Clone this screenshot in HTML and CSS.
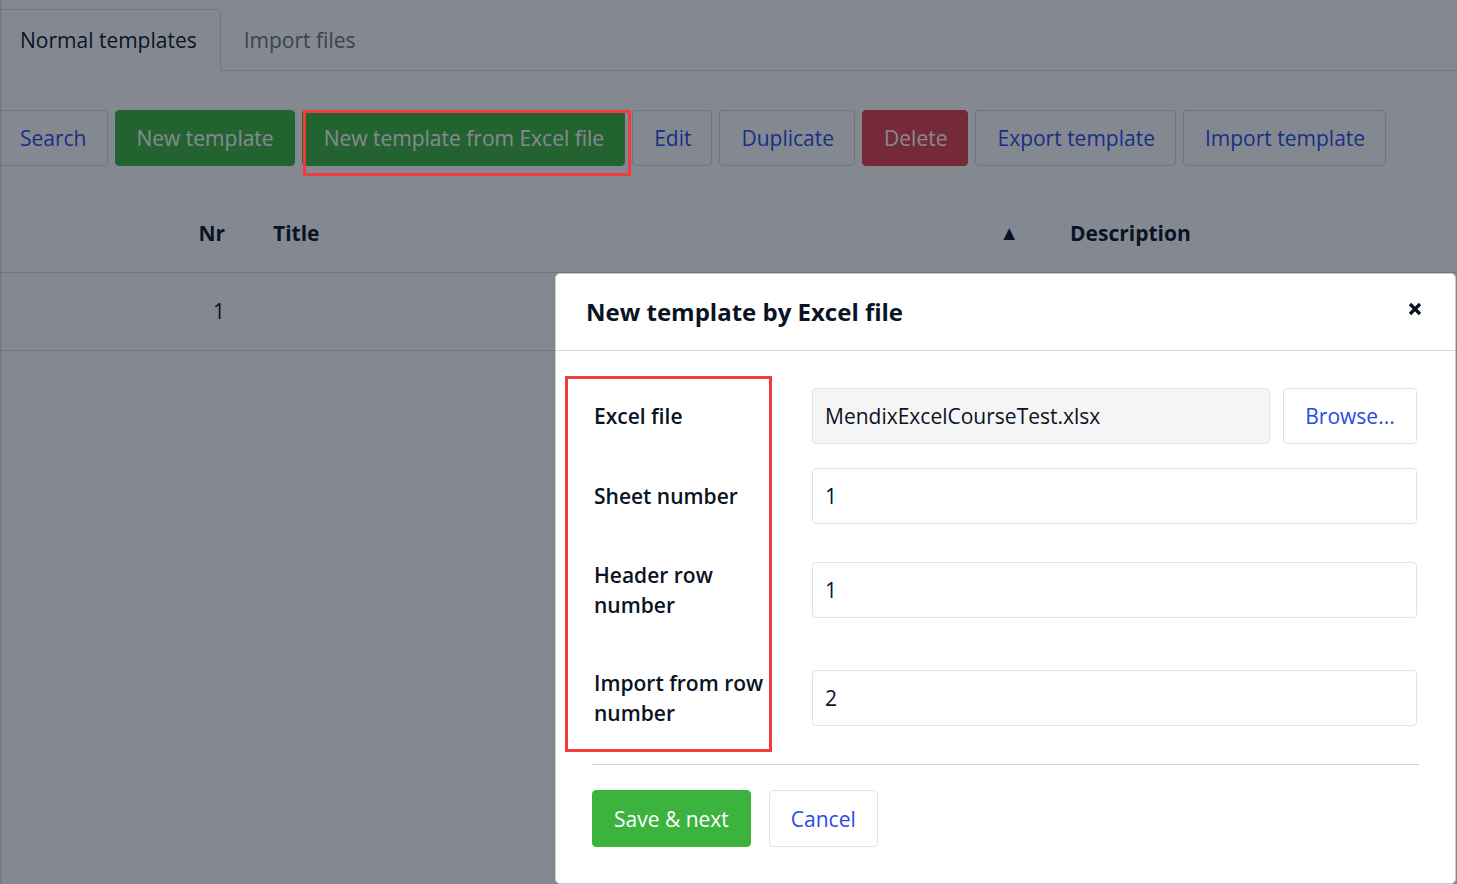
FILE: index.html
```html
<!DOCTYPE html>
<html lang="en">
<head>
<meta charset="utf-8">
<title>Templates</title>
<link rel="stylesheet" href="styles.css">
</head>
<body>
<div class="page">
  <div class="tabs">
    <div class="tab tab-active">Normal templates</div>
    <div class="tab">Import files</div>
  </div>
  <div class="toolbar">
    <button class="btn btn-default">Search</button>
    <button class="btn btn-success">New template</button>
    <button class="btn btn-success">New template from Excel file</button>
    <button class="btn btn-default">Edit</button>
    <button class="btn btn-default">Duplicate</button>
    <button class="btn btn-danger">Delete</button>
    <button class="btn btn-default">Export template</button>
    <button class="btn btn-default">Import template</button>
  </div>
  <table class="grid">
    <thead>
      <tr>
        <th class="col-nr">Nr</th>
        <th class="col-title"><span class="th-flex"><span>Title</span><span class="sort">&#9650;</span></span></th>
        <th class="col-desc">Description</th>
      </tr>
    </thead>
    <tbody>
      <tr>
        <td class="col-nr">1</td>
        <td class="col-title"></td>
        <td class="col-desc"></td>
      </tr>
    </tbody>
  </table>
</div>

<div class="backdrop"></div>

<div class="modal">
  <div class="modal-header">
    <h4 class="modal-title">New template by Excel file</h4>
    <span class="modal-close"><svg width="14" height="14" viewBox="0 0 14 14"><path d="M2 2 L12 12 M12 2 L2 12" stroke="#0a1324" stroke-width="3.2" stroke-linecap="butt"/></svg></span>
  </div>
  <div class="modal-body">
    <div class="form-row">
      <label class="form-label">Excel file</label>
      <div class="form-control-wrap file-wrap">
        <div class="input input-readonly">MendixExcelCourseTest.xlsx</div>
        <button class="btn btn-default btn-browse">Browse...</button>
      </div>
    </div>
    <div class="form-row">
      <label class="form-label">Sheet number</label>
      <div class="form-control-wrap"><div class="input">1</div></div>
    </div>
    <div class="form-row">
      <label class="form-label">Header row number</label>
      <div class="form-control-wrap"><div class="input">1</div></div>
    </div>
    <div class="form-row">
      <label class="form-label">Import from row number</label>
      <div class="form-control-wrap"><div class="input">2</div></div>
    </div>
    <div class="modal-footer">
      <button class="btn btn-save">Save &amp; next</button>
      <button class="btn btn-default btn-cancel">Cancel</button>
    </div>
  </div>
</div>

<div class="edge"></div>
<div class="mark mark-button"></div>
<div class="mark mark-labels"></div>
</body>
</html>
```

FILE: styles.css
```css
* { box-sizing: border-box; }

html, body {
  margin: 0;
  padding: 0;
  background: #ffffff;
  font-family: "Open Sans", "Noto Sans", sans-serif;
  color: #0a1324;
  overflow: hidden;
  height: 100%;
}

.page {
  margin-left: -2px;
  padding-top: 9px;
}

/* Tabs */
.tabs {
  display: flex;
  border-bottom: 1px solid #d6d8dc;
}
.tab {
  font-size: 21px;
  line-height: 30px;
  padding: 15px 23px 15px 22px;
  color: #6c7079;
  border: 1px solid transparent;
  border-bottom: none;
  margin-bottom: -1px;
}
.tab-active {
  color: #0a1324;
  background: #fff;
  border-color: #d6d8dc;
  border-radius: 4px 4px 0 0;
  padding: 15px 23px 16px 21px;
}

/* Toolbar */
.toolbar {
  display: flex;
  gap: 7px;
  margin-top: 39px;
}
.btn {
  font-family: "Open Sans", "Noto Sans", sans-serif;
  font-size: 21px;
  line-height: 28px;
  height: 56px;
  padding: 0 20px 0 21px;
  border: 1px solid #d6d8dc;
  border-radius: 4px;
  background: #ffffff;
  color: #264ae5;
  cursor: pointer;
  white-space: nowrap;
}
.btn-success {
  background: #3cb33d;
  border-color: #3cb33d;
  color: #ffffff;
}
.btn-danger {
  background: #e33f4e;
  border-color: #e33f4e;
  color: #ffffff;
}

/* Grid */
.grid {
  margin-top: 28px;
  width: 100%;
  border-collapse: collapse;
  table-layout: fixed;
}
.grid th, .grid td {
  font-size: 21px;
  line-height: 30px;
  height: 78px;
  padding: 0 24px;
  text-align: left;
  vertical-align: middle;
}
.grid th {
  font-weight: 700;
  border-bottom: 1px solid #d6d8dc;
}
.grid td {
  border-bottom: 1px solid #d6d8dc;
}
.grid .col-nr { width: 251px; text-align: right; }
.grid .col-title { width: 797px; padding-right: 27px; }
.th-flex {
  display: flex;
  justify-content: space-between;
  align-items: center;
}
.sort { font-size: 20px; }

/* Backdrop */
.backdrop {
  position: fixed;
  inset: 0;
  background: rgba(10, 19, 36, 0.5);
}
.edge {
  position: fixed;
  left: 0;
  top: 0;
  bottom: 0;
  width: 2px;
  background: rgba(10, 19, 36, 0.1);
}

/* Modal */
.modal {
  position: absolute;
  left: 555px;
  top: 273px;
  width: 901px;
  background: #ffffff;
  border: 1px solid #c8cbd0;
  border-radius: 5px;
}
.modal-header {
  height: 77px;
  display: flex;
  align-items: center;
  justify-content: space-between;
  padding: 0 33px 0 30px;
  border-bottom: 1px solid #d6d8dc;
}
.modal-title {
  margin: 0;
  font-size: 24px;
  font-weight: 700;
  line-height: 30px;
  color: #0a1324;
}
.modal-close {
  display: flex;
  width: 14px;
  height: 14px;
  margin-top: -6px;
}
.modal-body {
  padding: 37px 38px 36px 36px;
}
.form-row {
  display: flex;
  align-items: center;
  margin-bottom: 24px;
}
.form-label {
  width: 220px;
  flex: none;
  padding: 12px 24px 12px 2px;
  font-size: 21px;
  line-height: 30px;
  font-weight: 600;
  color: #0a1324;
}
.form-control-wrap {
  flex: 1;
  display: flex;
  gap: 13px;
}
.input {
  flex: 1;
  height: 56px;
  border: 1px solid #e2e3e6;
  border-radius: 4px;
  padding: 0 12px;
  font-size: 21px;
  line-height: 54px;
  color: #0a1324;
  background: #ffffff;
}
.input-readonly {
  background: #f5f5f6;
}
.btn-browse {
  border-color: #e2e3e6;
  padding: 0 21px;
  width: 134px;
}
.modal-footer {
  border-top: 1px solid #d0d2d6;
  padding-top: 25px;
  margin-right: -2px;
  display: flex;
  gap: 18px;
}
.btn-save {
  background: #3cb33d;
  border-color: #3cb33d;
  color: #ffffff;
  height: 57px;
  padding: 0 21px;
}
.btn-cancel {
  border-color: #e2e3e6;
  height: 57px;
  padding: 0 21px;
}

/* Annotation marks */
.mark {
  position: absolute;
  border: 3px solid #f03c3c;
}
.mark-button {
  left: 303px;
  top: 110px;
  width: 328px;
  height: 66px;
}
.mark-labels {
  left: 565px;
  top: 376px;
  width: 207px;
  height: 376px;
}
```
